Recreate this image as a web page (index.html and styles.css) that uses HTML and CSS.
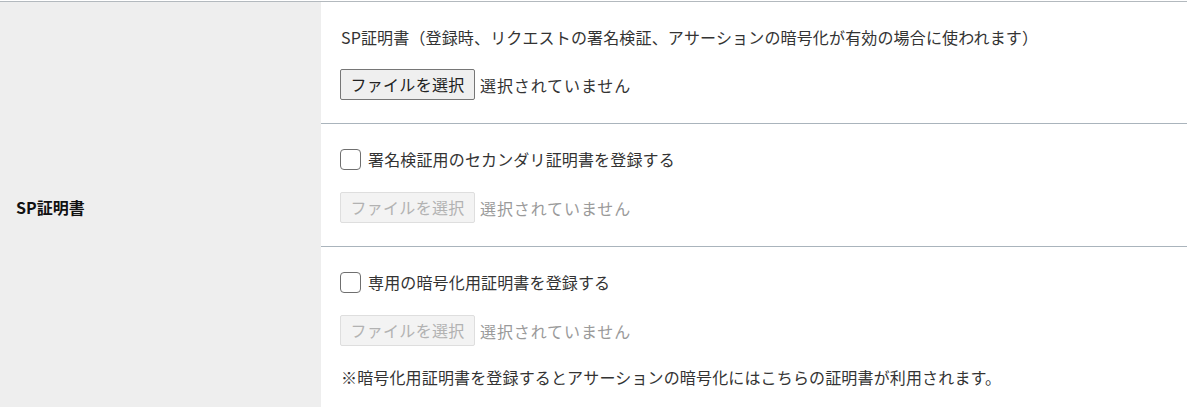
FILE: index.html
```html
<!DOCTYPE html>
<html lang="ja">
<head>
<meta charset="utf-8">
<title>SP証明書</title>
<link rel="stylesheet" href="styles.css">
</head>
<body>
<div class="table">
  <div class="row">
    <div class="row-head">SP証明書</div>
    <div class="row-body">
      <div class="section section--first">
        <p class="desc">SP証明書（登録時、リクエストの署名検証、アサーションの暗号化が有効の場合に使われます）</p>
        <div class="file">
          <button class="file-btn" type="button">ファイルを選択</button>
          <span class="file-name">選択されていません</span>
        </div>
      </div>
      <div class="section">
        <label class="check">
          <input class="check-box" type="checkbox">
          <span class="check-label">署名検証用のセカンダリ証明書を登録する</span>
        </label>
        <div class="file file--disabled">
          <button class="file-btn" type="button" disabled>ファイルを選択</button>
          <span class="file-name">選択されていません</span>
        </div>
      </div>
      <div class="section section--last">
        <label class="check">
          <input class="check-box" type="checkbox">
          <span class="check-label">専用の暗号化用証明書を登録する</span>
        </label>
        <div class="file file--disabled">
          <button class="file-btn" type="button" disabled>ファイルを選択</button>
          <span class="file-name">選択されていません</span>
        </div>
        <p class="note">※暗号化用証明書を登録するとアサーションの暗号化にはこちらの証明書が利用されます。</p>
      </div>
    </div>
  </div>
</div>
</body>
</html>
```

FILE: styles.css
```css
* {
  box-sizing: border-box;
}

html, body {
  margin: 0;
  padding: 0;
  background: #ffffff;
}

body {
  font-family: "Noto Sans CJK JP", "Noto Sans", sans-serif;
  font-size: 16px;
  color: #333333;
  padding-top: 1px;
  letter-spacing: 0.15px;
}

.table {
  border-top: 1px solid #b3b9be;
}

.row {
  display: grid;
  grid-template-columns: 321px 1fr;
}

.row-head {
  background: #eeeeee;
  display: flex;
  align-items: center;
  padding-left: 16px;
  font-weight: bold;
  font-size: 16px;
  color: #111111;
  padding-bottom: 2px;
  letter-spacing: 0;
}

.row-body {
  display: flex;
  flex-direction: column;
}

.section {
  display: flex;
  flex-direction: column;
  align-items: flex-start;
  gap: 22px;
  padding: 24px 20px 23px;
  border-bottom: 1px solid #aab4bc;
}

.section--first {
  gap: 21px;
}

.section--last {
  border-bottom: none;
  padding-bottom: 25px;
}

.section--last .note {
  margin-top: -2px;
}

.desc,
.note {
  margin: 0;
  line-height: 22px;
  color: #333333;
  white-space: nowrap;
}

.file {
  display: flex;
  align-items: center;
  gap: 5px;
  height: 31px;
}

.file-btn {
  font-family: inherit;
  font-size: 16px;
  letter-spacing: 0.3px;
  color: #222222;
  background: #efefef;
  border: 1px solid #767676;
  border-radius: 2px;
  height: 31px;
  width: 135px;
  padding: 0;
  line-height: 29px;
  margin: 0 0 0 -1px;
}

.file-name {
  color: #333333;
  line-height: 22px;
  letter-spacing: 0.9px;
}

.file--disabled .file-btn {
  background: #f3f3f3;
  border-color: #dedede;
  color: #b2b2b2;
}

.file--disabled .file-name {
  color: #9a9a9a;
}

.check {
  display: flex;
  align-items: center;
  gap: 7px;
  height: 22px;
}

.check-box {
  appearance: none;
  -webkit-appearance: none;
  width: 21px;
  height: 21px;
  margin: 0 0 0 -1px;
  border: 1px solid #6f6f6f;
  border-radius: 4px;
  background: #ffffff;
}

.check-label {
  line-height: 22px;
  color: #333333;
}
```
